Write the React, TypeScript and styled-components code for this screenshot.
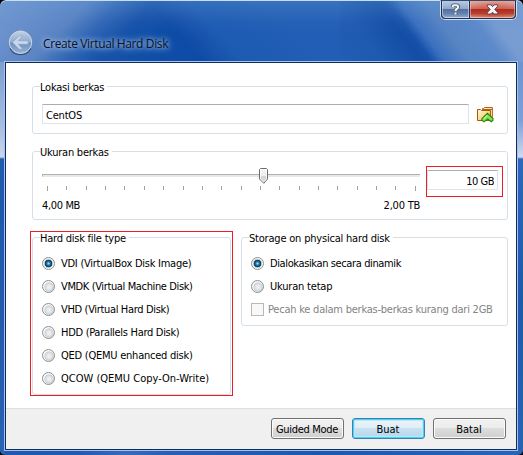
import React, { useState } from "react";
import styled, { createGlobalStyle, css } from "styled-components";

const GlobalStyle = createGlobalStyle`
  *, *::before, *::after { box-sizing: border-box; }
  html, body { margin: 0; padding: 0; background: #000; overflow: hidden; }
`;

const Window = styled.div`
  width: 523px;
  height: 455px;
  display: flex;
  flex-direction: column;
  padding: 1px 5px 4px 4px;
  border-radius: 6px 6px 5px 5px;
  overflow: hidden;
  font: 11px/13px "DejaVu Sans Condensed", "DejaVu Sans", sans-serif;
  color: #000;
  box-shadow: inset 0 1px 0 #c9dff0;
  background:
    linear-gradient(#7c9ed2 0, #a9c0e2 68px, #c9d6ea 95px, #1e5aae 97px, #2259ad 240px, #2a62b6 393px) 0 62px / 5px 393px no-repeat,
    linear-gradient(#6a95d2 0, #7c9fd6 58px, #d0daec 95px, #2d67bd 97px, #2058ab 240px, #2a62b6 393px) 100% 62px / 5px 393px no-repeat,
    linear-gradient(90deg, #1d58ae, #1f5bb2 15%, #346cbb 24%, #2661b4 32%, #1c58ad 60%, #2864b8) 0 100% / 100% 5px no-repeat,
    linear-gradient(180deg, rgba(100, 155, 210, 0.34), rgba(80, 130, 200, 0.08) 22px, rgba(80, 130, 200, 0) 35px),
    linear-gradient(134deg, #7599d0 0, #688fcb 35px, #5b84c3 65px, rgba(60, 110, 186, 0.75) 88px, rgba(35, 90, 175, 0.3) 112px, rgba(20, 80, 170, 0) 140px) 0 0 / 300px 62px no-repeat,
    linear-gradient(48deg, #1450a8 0, #1450a8 90px, #0d4ba6 150px, #1752ac 165px, #1d5ab2 180px, #225eb5 240px, #225eb5 100%) 0 0 / 340px 62px no-repeat,
    linear-gradient(53deg, #225eb5 0, #1f5ab1 35px, #134da5 66px, #1752aa 74px, #3c70bf 84px, #5784c3 104px, #5d8aca 132px, #779cd2 146px, #7a9ed4 100%) 100% 0 / 183px 62px no-repeat,
    #2059af;
`;

const TitleBar = styled.header`
  height: 60px;
  flex: none;
  display: flex;
  justify-content: space-between;
  align-items: flex-start;
`;

const TitleGroup = styled.div`
  display: flex;
  align-items: center;
  gap: 9px;
  padding: 28px 0 0 3px;
`;

const Title = styled.h1`
  margin: 3px 0 0;
  font: 400 12px/16px "Open Sans", "Noto Sans", sans-serif;
  letter-spacing: -0.38px;
  color: #0a1222;
  text-shadow: 0 0 4px rgba(190, 212, 245, 0.7), 0 0 7px rgba(180, 205, 242, 0.8), 0 0 11px rgba(180, 205, 242, 0.7);
`;

const CaptionButtons = styled.div`
  display: flex;
  height: 20px;
  width: 77px;
  margin: -1px 1px 0 0;
  border: 1px solid #d3deee;
  border-top-color: #34496e;
  border-radius: 0 0 5px 5px;
  background: #1e3157;
  padding: 0 1px 1px;
  overflow: hidden;
`;

const CaptionButton = styled.button<{ $close?: boolean }>`
  display: flex;
  align-items: center;
  justify-content: center;
  padding: 0;
  border: 1px solid rgba(220, 232, 248, 0.55);
  ${({ $close }) =>
    $close
      ? css`
          flex: 1;
          margin-left: 1px;
          border-color: rgba(250, 200, 190, 0.55);
          border-radius: 0 0 4px 0;
          background:
            radial-gradient(ellipse 24px 14px at 50% 60%, rgba(205, 40, 15, 0.35), rgba(205, 40, 15, 0)),
            linear-gradient(#dfa79a 0, #cd6c5e 46%, #a92c22 50%, #b2402f 75%, #cf8a78);
        `
      : css`
          width: 27px;
          border-radius: 0 0 0 4px;
          background: linear-gradient(#b3c6e1 0, #8fa7cc 46%, #56719f 50%, #627fae 75%, #87a3cb);
        `}
`;

const Client = styled.main`
  flex: 1;
  display: flex;
  flex-direction: column;
  border: 1px solid #a6c4eb;
  outline: 1px solid #102c5c;
  outline-offset: -2px;
  padding: 1px;
  background: #fff;
`;

const Body = styled.div`
  flex: 1;
  display: flex;
  flex-direction: column;
  padding: 17px 8px 0 26px;
`;

const Group = styled.fieldset<{ $h: number; $w: number }>`
  position: relative;
  flex: none;
  width: ${({ $w }) => $w}px;
  height: ${({ $h }) => $h}px;
  min-width: 0;
  margin: 0;
  padding: 0 9px;
  border: 1px solid #d5dfe8;
  border-radius: 3px;
`;

const Legend = styled.legend`
  height: 13px;
  margin-left: -2px;
  padding: 0 3px 0 0;
  line-height: 15px;
  white-space: nowrap;
`;

const PathRow = styled.div`
  display: flex;
  align-items: center;
  gap: 8px;
  padding-top: 11px;
`;

const Field = styled.input<{ $w: number; $right?: boolean }>`
  width: ${({ $w }) => $w}px;
  height: 20px;
  padding: ${({ $right }) => ($right ? "2px 3px 0 0" : "3px 0 0 3px")};
  border: 1px solid #e2e3ea;
  border-top-color: #abadb3;
  border-radius: 1px;
  outline: none;
  background: #fff;
  font: inherit;
  letter-spacing: ${({ $right }) => ($right ? -0.5 : -0.2)}px;
  color: #000;
  text-align: ${({ $right }) => ($right ? "right" : "left")};
`;

const IconButton = styled.button`
  display: flex;
  padding: 1px 0 0;
  border: 0;
  background: none;
`;

const SizeRow = styled.div`
  display: flex;
  align-items: flex-start;
  gap: 7px;
  padding-top: 10px;
`;

const Slider = styled.div`
  position: relative;
  width: 378px;
  padding-top: 6px;
`;

const Groove = styled.div`
  height: 3px;
  border: solid #e7eaea;
  border-width: 1px 0;
  border-top-color: #aeb0b0;
  border-left: 1px solid #b6b8b8;
  background: #e7eaea;
`;

const Thumb = styled.svg`
  position: absolute;
  left: 216px;
  top: -1px;
`;

const Ticks = styled.div`
  display: flex;
  justify-content: space-between;
  padding: 0 4px 0 5px;
  margin-top: 9px;
  height: 5px;
`;

const Tick = styled.i`
  width: 1px;
  height: 4px;
  background: #a2a397;
  &:first-child, &:last-child { height: 5px; }
`;

const RangeLabels = styled.div`
  display: flex;
  justify-content: space-between;
  margin-top: 8px;
`;

const SizeBox = styled.div`
  position: relative;
  padding-top: 2px;
`;

const Callout = styled.div<{ $x: number; $y: number; $w: number; $h: number }>`
  position: absolute;
  left: ${({ $x }) => $x}px;
  top: ${({ $y }) => $y}px;
  width: ${({ $w }) => $w}px;
  height: ${({ $h }) => $h}px;
  border: 1px solid #ee1c25;
  pointer-events: none;
`;

const Columns = styled.div`
  display: flex;
  align-items: flex-start;
  gap: 10px;
`;

const OptionList = styled.div`
  display: flex;
  flex-direction: column;
  gap: 10px;
  padding-top: 13px;
`;

const Option = styled.label`
  display: flex;
  align-items: center;
  height: 13px;
  gap: 6px;
  white-space: nowrap;
`;

const Dot = styled.input`
  appearance: none;
  flex: none;
  width: 13px;
  height: 13px;
  margin: 0;
  border: 1px solid #8e8f8f;
  border-radius: 50%;
  background: radial-gradient(circle 6px at 55% 55%, #f4f4f4 0, #e3e4e5 45%, #cccfd1 72%, #fafafa 84%);
  &:checked {
    background: radial-gradient(circle 6px at 50% 50%, #9be4fa 0, #2f93c4 24%, #14507c 44%, #0f3656 58%, #c3cdd4 68%, #f5f6f7 84%);
  }
`;

const Check = styled.input`
  appearance: none;
  flex: none;
  width: 13px;
  height: 13px;
  margin: 0;
  border: 1px solid #b9b9b9;
  background: #f8f8f8;
`;

const CheckOption = styled(Option)`
  gap: 4px;
  color: #838383;
`;

const Text = styled.span<{ $ls?: number }>`
  letter-spacing: ${({ $ls = -0.23 }) => $ls}px;
  white-space: nowrap;
`;

const Footer = styled.footer`
  height: 41px;
  flex: none;
  display: flex;
  justify-content: flex-end;
  gap: 8px;
  padding: 9px 10px 0 0;
  border-top: 1px solid #dfdfdf;
  background: #f0f0f0;
`;

const PushButton = styled.button<{ $primary?: boolean }>`
  width: 73px;
  height: 21px;
  padding: 2px 1px 0 0;
  border: 1px solid #707070;
  border-radius: 3px;
  box-shadow: inset 0 0 0 1px #fbfbfb;
  background: linear-gradient(#f2f2f2 0, #ebebeb 48%, #dddddd 50%, #cfcfcf);
  font: inherit;
  line-height: 17px;
  color: #000;
  white-space: nowrap;
  ${({ $primary }) =>
    $primary &&
    css`
      border-color: #3c7fb1;
      box-shadow: inset 0 0 0 1px #48d0f5, inset 0 0 1px 2px #b5eafa;
      background: linear-gradient(#eef4f8 0, #deedf6 48%, #c8e1f0 50%, #b6d6e9);
    `}
`;

const BackIcon = () => (
  <svg width="27" height="27" viewBox="0 0 27 27">
    <defs>
      <linearGradient id="backFill" x1="0" y1="0" x2="0" y2="1">
        <stop offset="0" stopColor="#c3d2e6" />
        <stop offset=".48" stopColor="#91acd0" />
        <stop offset=".52" stopColor="#6f91bf" />
        <stop offset="1" stopColor="#9ab5d9" />
      </linearGradient>
    </defs>
    <circle cx="13.5" cy="13.5" r="12" fill="url(#backFill)" stroke="#6d85aa" />
    <circle cx="13.5" cy="13.2" r="11.2" fill="none" stroke="#d0def0" strokeWidth=".9" />
    <path d="M3 19.5a12 12 0 0 0 21 0" fill="none" stroke="#3c5179" strokeWidth="1.2" />
    <path d="M5.5 13.5 12.3 6.8h3.4l-4.3 4.9h9.7v3.6h-9.7l4.3 4.9h-3.4z" fill="#c8d6ea" stroke="#86a0c4" strokeWidth=".6" />
  </svg>
);

const HelpIcon = () => (
  <svg width="11" height="13" viewBox="0 0 11 13" fill="none">
    <path d="M2.7 4.2V3.4Q2.7 2.2 4 2.2h2.5q1.5 0 1.5 1.3v1q0 .8-1 1.3-1.5.8-1.5 2.2M5.5 9.6v2" stroke="#435069" strokeWidth="3.6" />
    <path d="M2.7 4.2V3.4Q2.7 2.2 4 2.2h2.5q1.5 0 1.5 1.3v1q0 .8-1 1.3-1.5.8-1.5 2.2M5.5 9.6v2" stroke="#f4f4f4" strokeWidth="2.1" />
  </svg>
);

const CloseIcon = () => (
  <svg width="13" height="11" viewBox="0 0 13 11">
    <path
      d="M1.3.8h3.6l1.6 1.8L8.1.8h3.6v1.4L8.8 5.4l2.9 3.2V10H8.1L6.5 8.2 4.9 10H1.3V8.6l2.9-3.2-2.9-3.2z"
      fill="#f6f4f4"
      stroke="#5a4556"
      strokeWidth="1"
    />
  </svg>
);

const FolderIcon = () => (
  <svg width="17" height="16" viewBox="0 0 17 16">
    <defs>
      <linearGradient id="folderFill" x1="0" y1="0" x2="1" y2="1">
        <stop offset="0" stopColor="#fffbe0" />
        <stop offset=".55" stopColor="#fbd784" />
        <stop offset="1" stopColor="#f2ac3c" />
      </linearGradient>
    </defs>
    <path d="M5.5 3V1.5h1L7.5.5h7.9V10l-2 2z" fill="#fce9a8" stroke="#b35f17" />
    <path d="M5.8 2.5h9.2" stroke="#b35f17" />
    <path d="M.5 2.5h3l1 1h8.9v10H.5z" fill="url(#folderFill)" stroke="#a85410" />
    <path d="M10.5 6.3 16 11.6v1.6l-1.8 1.5-3.5-2.8-3.7 3-2.1-1.7v-1.5z" fill="#8ee04c" stroke="#18860b" strokeWidth="1.1" />
    <path d="m10.5 8-3.8 3.8" stroke="#e7fbd4" />
  </svg>
);

const SliderThumb = () => (
  <Thumb width="12" height="18" viewBox="0 0 12 18">
    <defs>
      <linearGradient id="thumbFill" x1="0" y1="0" x2="0" y2="1">
        <stop offset="0" stopColor="#f8f8f8" />
        <stop offset=".5" stopColor="#ededed" />
        <stop offset=".52" stopColor="#d5d5d5" />
        <stop offset="1" stopColor="#d8d8d8" />
      </linearGradient>
    </defs>
    <path d="M2.5 1.5h6l1 1v9.5L5.8 16.3 1.5 12V2.5z" fill="url(#thumbFill)" stroke="#6d6d6d" />
    <path d="M2.5 2.5h6v9.2L5.6 14.9l-3.1-3.2z" fill="none" stroke="#fdfdfd" strokeWidth=".8" />
  </Thumb>
);

const fileTypes = [
  { id: "vdi", label: "VDI (VirtualBox Disk Image)", ls: -0.26 },
  { id: "vmdk", label: "VMDK (Virtual Machine Disk)", ls: -0.37 },
  { id: "vhd", label: "VHD (Virtual Hard Disk)", ls: -0.34 },
  { id: "hdd", label: "HDD (Parallels Hard Disk)", ls: -0.3 },
  { id: "qed", label: "QED (QEMU enhanced disk)", ls: -0.24 },
  { id: "qcow", label: "QCOW (QEMU Copy-On-Write)", ls: 0 },
];

const storageModes = [
  { id: "dynamic", label: "Dialokasikan secara dinamik", ls: -0.38 },
  { id: "fixed", label: "Ukuran tetap", ls: -0.2 },
];

const GroupSpacer = styled.div<{ $h: number }>`
  flex: none;
  height: ${({ $h }) => $h}px;
`;

export default function App() {
  const [type, setType] = useState("vdi");
  const [mode, setMode] = useState("dynamic");

  return (
    <>
      <GlobalStyle />
      <Window>
        <TitleBar>
          <TitleGroup>
            <BackIcon />
            <Title>Create Virtual Hard Disk</Title>
          </TitleGroup>
          <CaptionButtons>
            <CaptionButton aria-label="Help"><HelpIcon /></CaptionButton>
            <CaptionButton $close aria-label="Close"><CloseIcon /></CaptionButton>
          </CaptionButtons>
        </TitleBar>
        <Client>
          <Body>
            <Group $w={476} $h={54}>
              <Legend><Text>Lokasi berkas</Text></Legend>
              <PathRow>
                <Field $w={427} defaultValue="CentOS" />
                <IconButton aria-label="Choose location"><FolderIcon /></IconButton>
              </PathRow>
            </Group>
            <GroupSpacer $h={11} />
            <Group $w={476} $h={75}>
              <Legend><Text>Ukuran berkas</Text></Legend>
              <SizeRow>
                <Slider>
                  <Groove />
                  <SliderThumb />
                  <Ticks>
                    {Array.from({ length: 20 }, (_, i) => <Tick key={i} />)}
                  </Ticks>
                  <RangeLabels>
                    <Text $ls={-0.35}>4,00 MB</Text>
                    <Text>2,00 TB</Text>
                  </RangeLabels>
                </Slider>
                <SizeBox>
                  <Field $w={71} $right defaultValue="10 GB" />
                  <Callout $x={-1} $y={-2} $w={77} $h={31} />
                </SizeBox>
              </SizeRow>
            </Group>
            <GroupSpacer $h={11} />
            <Columns>
              <Group $w={199} $h={164}>
                <Legend><Text>Hard disk file type</Text></Legend>
                <OptionList>
                  {fileTypes.map((o) => (
                    <Option key={o.id}>
                      <Dot type="radio" name="type" checked={type === o.id} onChange={() => setType(o.id)} />
                      <Text $ls={o.ls}>{o.label}</Text>
                    </Option>
                  ))}
                </OptionList>
                <Callout $x={-3} $y={-13} $w={203} $h={165} />
              </Group>
              <Group $w={267} $h={95}>
                <Legend><Text $ls={-0.2}>Storage on physical hard disk</Text></Legend>
                <OptionList>
                  {storageModes.map((o) => (
                    <Option key={o.id}>
                      <Dot type="radio" name="mode" checked={mode === o.id} onChange={() => setMode(o.id)} />
                      <Text $ls={o.ls}>{o.label}</Text>
                    </Option>
                  ))}
                  <CheckOption>
                    <Check type="checkbox" disabled />
                    <Text>Pecah ke dalam berkas-berkas kurang dari 2GB</Text>
                  </CheckOption>
                </OptionList>
              </Group>
            </Columns>
          </Body>
          <Footer>
            <PushButton><Text $ls={-0.3}>Guided Mode</Text></PushButton>
            <PushButton $primary><Text $ls={0}>Buat</Text></PushButton>
            <PushButton><Text $ls={0}>Batal</Text></PushButton>
          </Footer>
        </Client>
      </Window>
    </>
  );
}
